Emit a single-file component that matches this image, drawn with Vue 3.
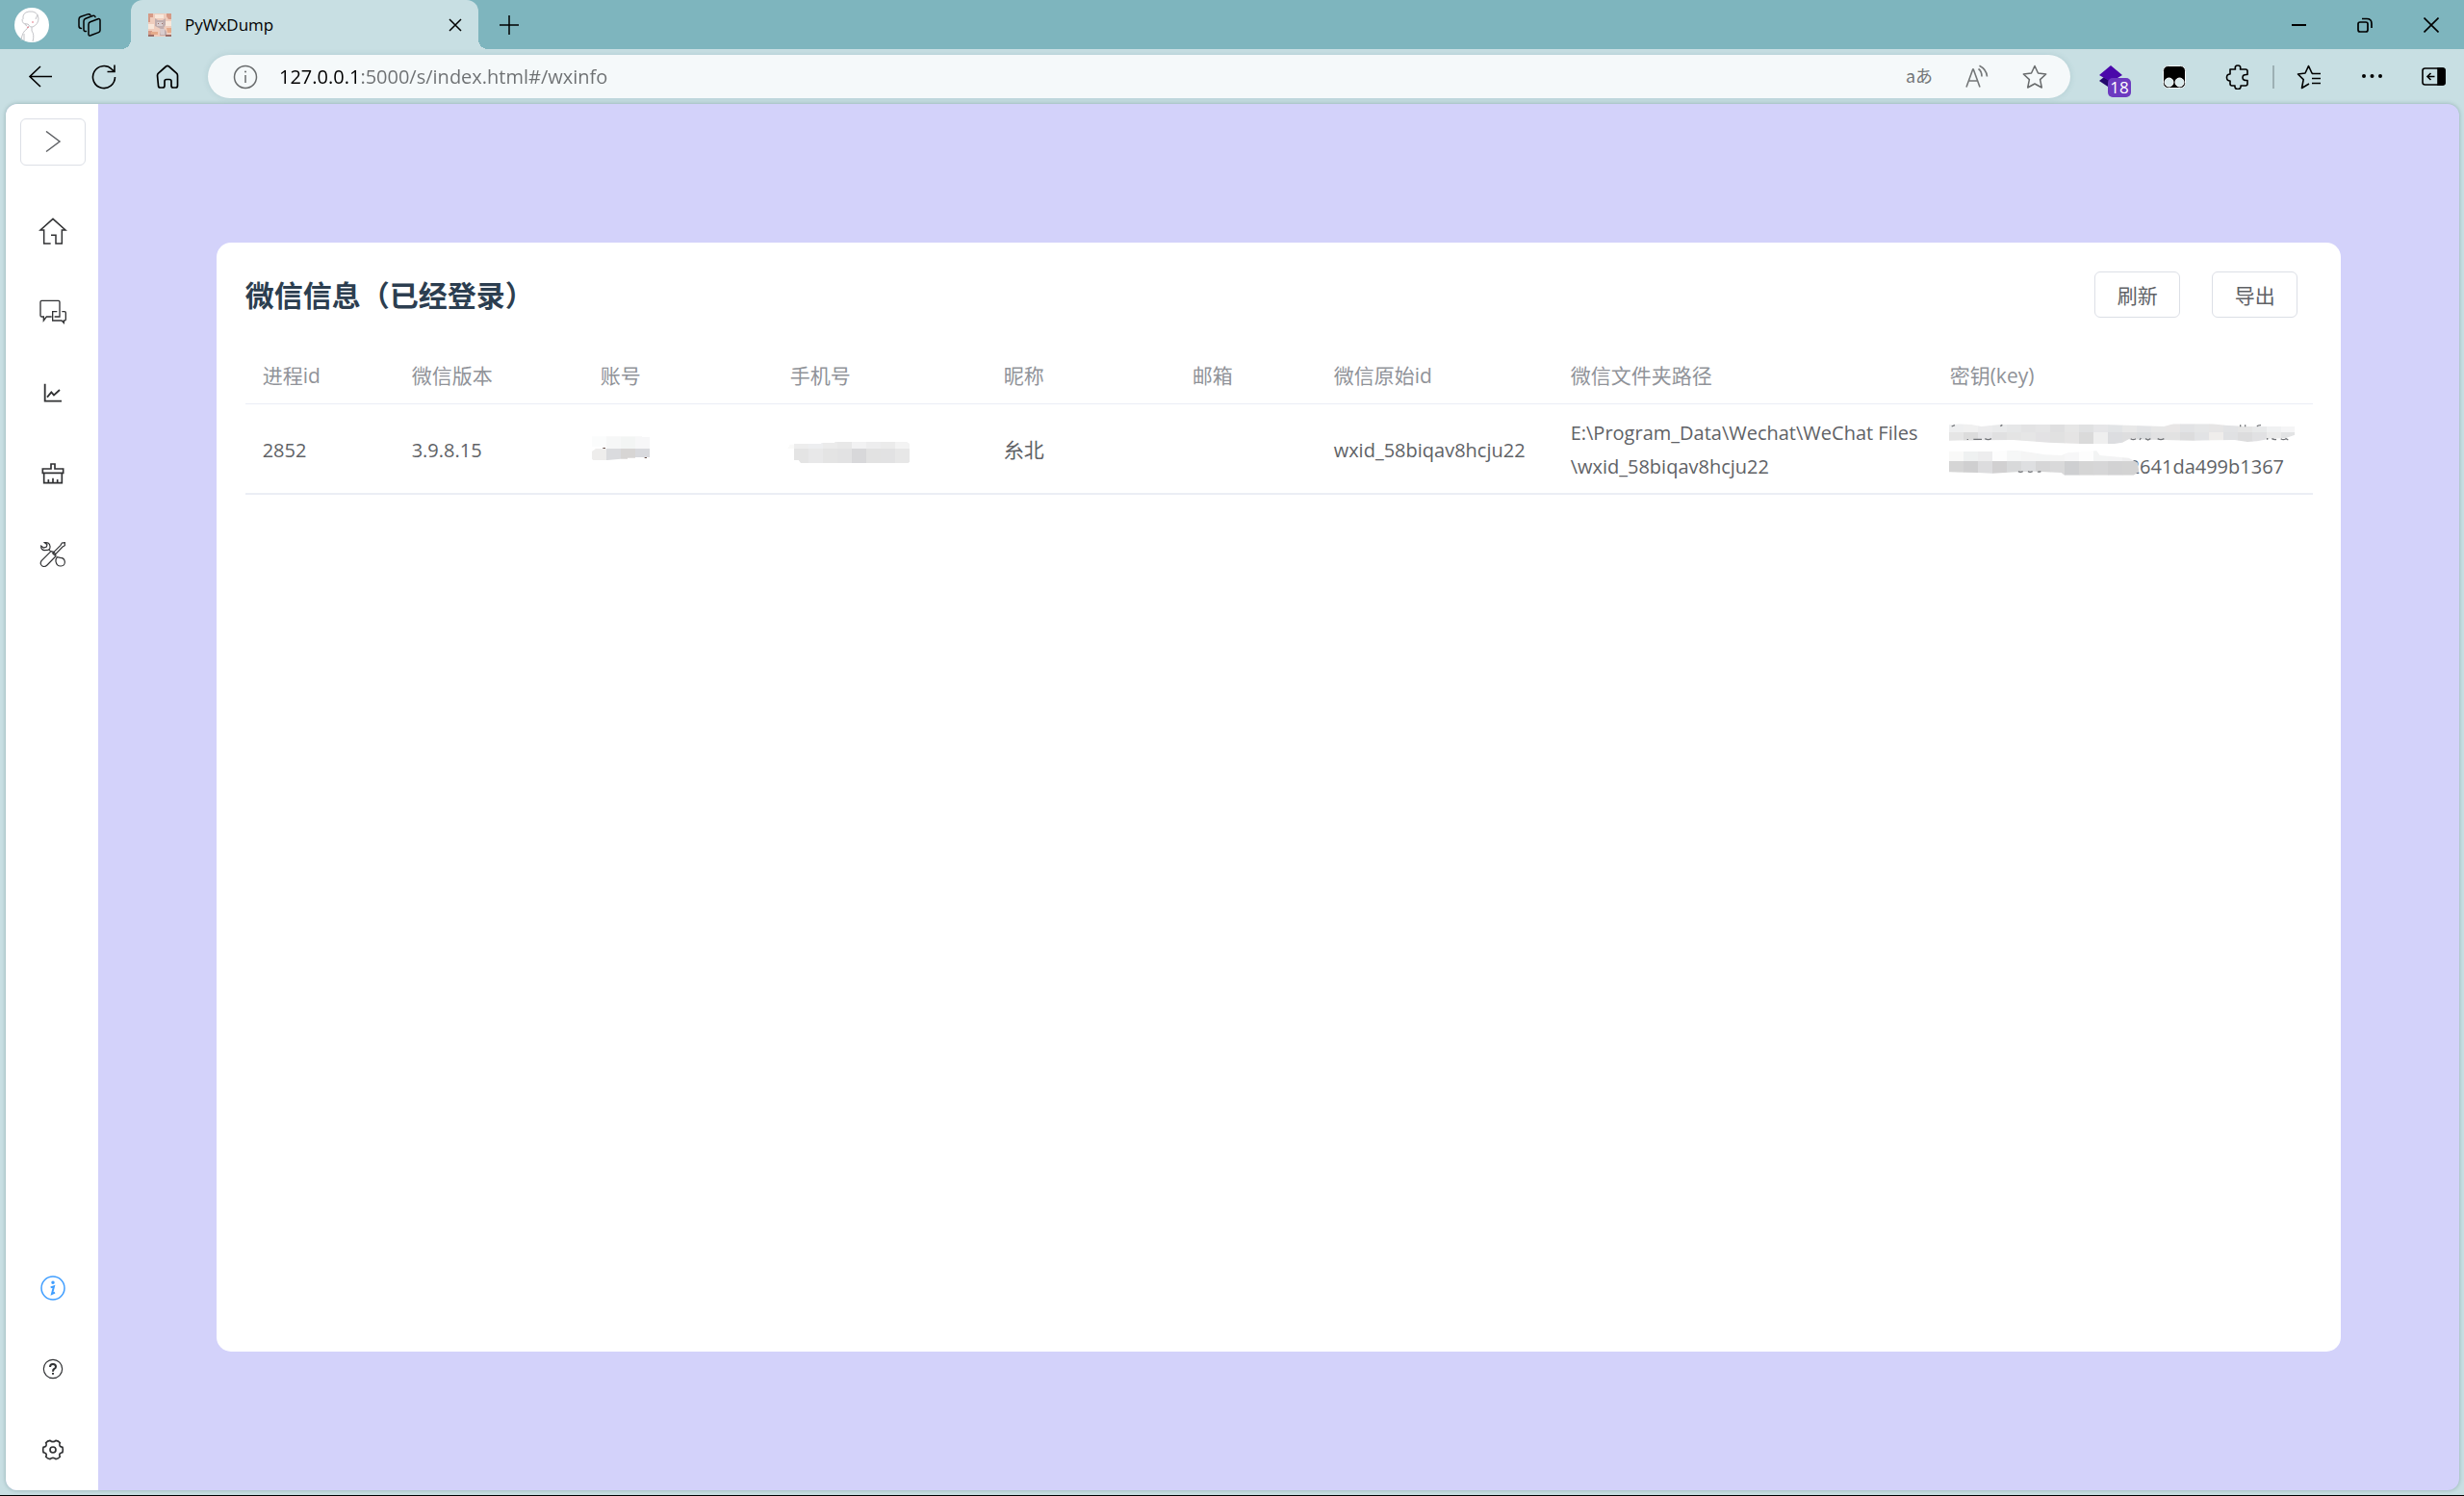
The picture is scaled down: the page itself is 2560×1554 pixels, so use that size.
<script setup>
import { ref } from 'vue'

const url = ref('127.0.0.1:5000/s/index.html#/wxinfo')

const columns = [
  { label: '进程id', width: 155 },
  { label: '微信版本', width: 196 },
  { label: '账号', width: 197 },
  { label: '手机号', width: 222 },
  { label: '昵称', width: 196 },
  { label: '邮箱', width: 147 },
  { label: '微信原始id', width: 246 },
  { label: '微信文件夹路径', width: 394 },
  { label: '密钥(key)', width: 395 },
]

const keyTop = ['#eeeff0', '#f0f0f0', '#ececed', '#e9eaeb', '#e6e7e8', '#e3e3e4', '#e5e5e6', '#dfdfe0', '#e6e6e6', '#e0e1e2', '#e6e6e8', '#e2e4e6', '#e8e8e8', '#e3e4e6', '#e7e7e7', '#e8e6e6', '#e2e3e5', '#e5e6e7', '#e6e5e5', '#e2e3e5', '#e5e5e5', '#e8e9ea', '#f0f1f2', '#f5f5f6']
const keyBottom = ['#e5e5e5', '#dcdcdc', '#e6e6e8', '#e0e0e1', '#e4e4e4', '#e6e6e6', '#e3e2e4', '#e1e1e1', '#e5e4e4', '#dadada', '#efefef', '#dcdde0', '#dededf', '#dadcde', '#e1e1e2', '#e2e2e2', '#dcdcdd', '#e2e3e5', '#efedeb', '#e0e1e3', '#dcdcdd', '#e1e1e3', '#ebebeb', '#e2e3e4']
const key2Top = ['#f9f9f8', '#eff1f1', '#ededee', '#fdfdfd', '#f6f7f7', '#f5f5f5', '#f4f5f5', '#f5f5f5', '#f7f7f8', '#fdfdfd', '#f3f4f4', '#f3f3f4', '#efeff0', '#f1f1f1']
const key2Bottom = ['#d5d5d5', '#cfcfd0', '#dcdcde', '#d1d0d1', '#d8d9da', '#dedfe1', '#d6d6d7', '#d9d9da', '#cecfd1', '#d5d5d5', '#d6d6d7', '#d2d2d3', '#d3d3d3', '#d3d3d4']
const phoneTop = ['#ededed', '#edeef0', '#ebebeb', '#e8e8e8', '#f2f2f3', '#ededee', '#ebebeb', '#f3f3f3']
const phoneBottom = ['#e4e4e4', '#e8e8e9', '#e4e4e4', '#e2e2e3', '#d8d8da', '#e2e2e2', '#e2e2e3', '#e7e7e7']
</script>

<template>
  <div class="browser">
    <header class="titlebar">
      <button class="avatar" aria-label="个人资料">
        <svg viewBox="0 0 36 36" width="36" height="36" fill="none" stroke="#c4c4c8" stroke-width="1">
          <circle cx="18" cy="18" r="18" fill="#fff" stroke="none" />
          <path d="M9 12Q8 5 15 4Q24 3 25 11Q25 17 19 20Q16 21 14 17Q8 18 8 12M12 16q-2 2 1 3M24 7l-2 5M15 19l-2 3q-5 3-6 12M18 20l0 4q3 4 1 11M10 27v7" />
          <path d="M18 15h2M13 20q1 1 2 0" stroke="#e57d8b" />
        </svg>
      </button>
      <button class="workspaces" aria-label="工作区">
        <svg viewBox="0 0 24 24" width="24" height="24" fill="none" stroke="#000" stroke-width="1.5" stroke-linejoin="round" stroke-linecap="round">
          <path d="M11 11.500q0-2 1.800-2.700l8-3q2.200-.700 2.200 1.300v10.500q0 1.400-1.500 2l-8.200 3.200q-2.300.800-2.300-1.300z" />
          <path d="M8.500 18.500q-2.500.500-2.500-2v-8.500q0-2 2-2.800l7-2.700q2.500-.900 3 1.200" />
          <path d="M3.500 15.500Q1 15.500 1 13V6q0-2 2-2.800L10 .900q2.300-.700 3 .900" />
        </svg>
      </button>
      <div class="tab">
        <svg class="favicon" viewBox="0 0 24 24" width="24" height="24">
          <path fill="#efcdbd" d="M0 0h24v24H0z" />
          <path fill="#d59a86" d="M0 0h5v4H2v5H0zM19 0h5v6h-3l-2-3zM0 18h4v6H0z" />
          <path fill="#f8e7da" d="M7 1h9v4H7zM0 11h6v5H0zM17 8h7v5h-7z" />
          <path fill="#c0adad" d="M7 5l3 2h5l3-2v7l-2 3 3 4v4h-7l1-7-6-3z" />
          <path fill="#d9cccd" d="M9 9h6v4H9zM12 16h5v6h-4z" />
          <path fill="#e5ab8b" d="M3 19h7v3H3zM19 15h5v5h-4z" />
          <path fill="#9a6c66" d="M0 22h6v2H0zM18 22h6v2h-6zM10 10h1v1h-1zM14 10h1v1h-1z" />
        </svg>
        <span class="tab-title">PyWxDump</span>
        <button class="tab-close" aria-label="关闭标签页">
          <svg viewBox="0 0 14 14" width="14" height="14" stroke="#000" stroke-width="1.500"><path d="M1 1l12 12M13 1L1 13" /></svg>
        </button>
      </div>
      <button class="new-tab" aria-label="新建标签页">
        <svg viewBox="0 0 22 22" width="22" height="22" stroke="#000" stroke-width="1.500"><path d="M11 1v20M1 11h20" /></svg>
      </button>
      <div class="window-controls">
        <button aria-label="最小化"><svg viewBox="0 0 16 16" width="16" height="16"><path d="M1 7h15v2H1z" /></svg></button>
        <button aria-label="还原">
          <svg viewBox="0 0 16 16" width="16" height="16" fill="none" stroke="#000" stroke-width="1.700"><rect x="1" y="5" width="10" height="10" rx="2" /><path d="M5 1.500h5q5 0 5 5V11" /></svg>
        </button>
        <button aria-label="关闭"><svg viewBox="0 0 16 16" width="16" height="16" stroke="#000" stroke-width="1.600"><path d="M.500.500l15 15M15.500.500l-15 15" /></svg></button>
      </div>
    </header>

    <nav class="toolbar">
      <button class="tool" aria-label="后退">
        <svg viewBox="0 0 26 26" width="26" height="26" fill="none" stroke="#000" stroke-width="1.600"><path d="M25 12.500H2M13 2L2 12.500l11 10.500" /></svg>
      </button>
      <button class="tool" aria-label="刷新">
        <svg viewBox="0 0 26 26" width="26" height="26" fill="none" stroke="#000" stroke-width="1.600"><path d="M24.500 13A11.500 11.500 0 1 1 21 4.800L24 7.500M24 .500v7h-7.500" /></svg>
      </button>
      <button class="tool" aria-label="主页">
        <svg viewBox="0 0 26 26" width="26" height="26" fill="none" stroke="#000" stroke-width="1.700" stroke-linejoin="round"><path d="M2.500 11.500q0-1.500 1-2.400L11.500 2q1.500-1.200 3 0l8 7.100q1 .900 1 2.400V22q0 2-2 2h-2.500q-2 0-2-2v-4.500q0-2-2-2h-3q-2 0-2 2V22q0 2-2 2h-2.500q-2 0-2-2z" /></svg>
      </button>
      <div class="address">
        <button class="site-info" aria-label="查看站点信息">
          <svg viewBox="0 0 26 26" width="26" height="26" fill="none" stroke="#686b6c" stroke-width="1.500"><circle cx="13" cy="13" r="11.500" /><path d="M13 11v8" /><circle cx="13" cy="7.500" r="1" fill="#686b6c" stroke="none" /></svg>
        </button>
        <input v-model="url" class="url" type="text" aria-label="地址栏" />
        <button class="translate" aria-label="翻译此页">aあ</button>
        <button aria-label="朗读此页">
          <svg viewBox="0 0 26 26" width="26" height="26" fill="none" stroke="#747778" stroke-width="1.600"><path d="M2 23.500L8.700 5h.600L16 23.500M4.500 17h9.500M14.500 4.500q3.500 2.500 3.500 8M15.500 1.200q7.500 3.800 8 11.300" /></svg>
        </button>
        <button aria-label="收藏此页">
          <svg viewBox="0 0 26 26" width="26" height="26" fill="none" stroke="#686b6c" stroke-width="1.500" stroke-linejoin="round"><path d="M13 1.500l3.500 7.500 8.200 1-6.100 5.600 1.700 8.400L13 20l-7.300 4 1.700-8.400L1.300 10l8.200-1z" /></svg>
        </button>
      </div>
      <button class="tool extension" aria-label="扩展">
        <svg viewBox="0 0 26 26" width="26" height="26"><path fill="#23086d" d="M1 17l5-4 12 8-5 4z" /><path fill="#4a08aa" d="M13 1l12 10-5 3 1 2-5 4-3-2L1 11z" /></svg>
        <span class="badge">18</span>
      </button>
      <button class="tool" aria-label="脚本管理器">
        <svg viewBox="0 0 26 26" width="26" height="26"><rect x="1.500" y="1.500" width="23" height="23" rx="5" stroke="#f2f6f7" /><circle cx="7.500" cy="18.500" r="4.500" fill="#d9eaec" stroke="#fff" /><circle cx="18.500" cy="18.500" r="4.500" fill="#d9eaec" stroke="#fff" /></svg>
      </button>
      <button class="tool" aria-label="扩展程序">
        <svg viewBox="0 0 26 26" width="26" height="26" fill="none" stroke="#000" stroke-width="1.600" stroke-linejoin="round"><path d="M5 5h5.500Q9.500 1 13 1t2.500 4H21q2 0 2 2v3.500q-5-.500-5 3t5 3V20q0 2-2 2h-5q.500 3.500-3 3.500T10 22H7q-2 0-2-2v-3q-3.500 0-3.500-3.500T5 10z" /></svg>
      </button>
      <span class="divider"></span>
      <button class="tool" aria-label="收藏夹">
        <svg viewBox="0 0 26 26" width="26" height="26" fill="none" stroke="#000" stroke-width="1.600" stroke-linejoin="round"><path d="M17 9.500L16 9l-3.500-7.500L9 9l-7.500 1 5.700 5.600L5.500 24.500 13 20M16 9.500h9M16 14.500h9M16 19.500h9" /></svg>
      </button>
      <button class="tool" aria-label="设置及其他">
        <svg viewBox="0 0 26 26" width="26" height="26"><circle cx="4" cy="12" r="2" /><circle cx="12.500" cy="12" r="2" /><circle cx="21" cy="12" r="2" /></svg>
      </button>
      <button class="tool last" aria-label="侧边栏">
        <svg viewBox="0 0 26 26" width="26" height="26" fill="none" stroke="#000" stroke-width="1.600"><rect x="1" y="4" width="23" height="17" rx="2.500" /><path fill="#000" d="M17 4h5q2 0 2 2v13q0 2-2 2h-5z" /><path d="M13.500 12.500H6M9.500 9L6 12.500 9.500 16" /></svg>
      </button>
    </nav>

    <div class="viewport">
      <aside class="sidebar">
        <button class="toggle" aria-label="展开菜单">
          <svg viewBox="0 0 24 24" width="24" height="24" fill="none" stroke="#606266" stroke-width="1.500"><path d="M5 .500L19 11 5 21.500" /></svg>
        </button>
        <a class="item" href="#/" aria-label="首页">
          <svg viewBox="-45 -45 90 90" stroke-width="4.500"><path d="M-6 13H9V39H28V-3H39L0-38-39-3H-28V39H-7" /></svg>
        </a>
        <a class="item" href="#/chat" aria-label="聊天">
          <svg viewBox="-45 -45 90 90" stroke-width="4"><path d="M-4 15H-20L-29 27V15H-35q-4 0-4-4V-31q0-4 4-4H17q4 0 4 4V15H5M13-1H-1V27H27L34 34V27H36q4 0 4-4V3q0-4-4-4H28" /></svg>
        </a>
        <a class="item" href="#/chart" aria-label="统计">
          <svg viewBox="-45 -45 90 90" stroke-width="5.500"><path d="M-25-28V26H27M-18 14L-5-2 3 7 21-9" /></svg>
        </a>
        <a class="item" href="#/clean" aria-label="清理">
          <svg viewBox="-45 -45 90 90" stroke-width="5"><path d="M-32-15H-6V-30H6V-15H32V-2H-32ZM-28-2V29H28V-2M-14 18V29M0 14V29M14 18V29" /></svg>
        </a>
        <a class="item" href="#/tools" aria-label="工具">
          <svg viewBox="-45 -45 90 90" stroke-width="3.500"><path d="M-26-37Q-10-39-9-25-8-15-17-14L-27-13Q-38-15-37-27L-29-21-20-24-18-31ZM-14-17L-8-11M37-37L28-36 24-29-1-4 5 2 30-24 37-28ZM-6-10L-36 20Q-42 30-33 36-25 40-18 33L9 5Q8-8-6-10ZM13 8Q8 14 9 22 12 37 25 36 38 35 37 22 35 10 23 10Z" /></svg>
        </a>
        <span class="spacer"></span>
        <a class="item active" href="#/wxinfo" aria-label="微信信息">
          <svg viewBox="-45 -45 90 90" stroke-width="4.500"><circle r="36" /><circle cy="-17" r="3" fill="currentColor" /><path d="M-7-2L3-5-3 18 6 14" stroke-width="6" /></svg>
        </a>
        <a class="item" href="#/help" aria-label="帮助">
          <svg viewBox="-45 -45 90 90" stroke-width="3.500"><circle r="29" /><path d="M-9-6Q-9-15 0-15 9-15 9-7 9-3 4 0 0 2 0 8M0 12V17" stroke-width="6" /></svg>
        </a>
        <a class="item" href="#/setting" aria-label="设置">
          <svg viewBox="-45 -45 90 90" stroke-width="5"><circle r="9" /><path d="M30-8Q32 0 30 8 23 10 21 13 19 16 22 22 17 28 9 29 5 25 0 25-5 25-9 29-17 28-22 22-19 16-21 13-23 10-30 8-32 0-30-8-23-10-21-13-19-16-22-22-17-28-9-29-5-25 0-25 5-25 9-29 17-28 22-22 19-16 21-13 23-10 30-8Z" /></svg>
        </a>
      </aside>

      <main class="main">
        <section class="card">
          <div class="card-head">
            <h1>微信信息（已经登录）</h1>
            <div class="actions">
              <button>刷新</button>
              <button>导出</button>
            </div>
          </div>
          <table>
            <colgroup>
              <col v-for="c in columns" :key="c.label" :style="{ width: c.width + 'px' }" />
            </colgroup>
            <thead>
              <tr><th v-for="c in columns" :key="c.label" scope="col">{{ c.label }}</th></tr>
            </thead>
            <tbody>
              <tr>
                <td>2852</td>
                <td>3.9.8.15</td>
                <td>
                  <svg class="mosaic" viewBox="57 24 153 108" width="51" height="36">
                    <path fill="#fbfcfc" d="M30 37H75V69H30z" /><path fill="#f6f7f7" d="M75 37H120V75H75z" />
                    <path fill="#f3f5f4" d="M120 37H165V75H120z" /><path fill="#f7f7f8" d="M165 37H186V39H210V75H165z" />
                    <path fill="#eeedec" d="M42 75H75V111H34L30 107V84z" /><path fill="#dadbde" d="M75 75H120V107L78 111H75z" />
                    <path fill="#d7d5d4" d="M120 75H165V104H141V107H120z" /><path fill="#d8d9dd" d="M165 75H210V102H165z" />
                    <path fill="#66504a" d="M64 72h8v3h-8zM194 102h7v3h-7z" />
                  </svg>
                </td>
                <td>
                  <svg class="mosaic" viewBox="648 24 372 108" width="124" height="36">
                    <defs><clipPath id="phone-mask"><path d="M660 60H745V57H787V54H1012L1020 60V116L1016 120H681L674 111H660z" /></clipPath></defs>
                    <path fill="#fafaf9" d="M648 62H660V75H640z" />
                    <g clip-path="url(#phone-mask)">
                      <rect v-for="(c, i) in phoneTop" :key="i" :x="660 + i * 45" y="50" width="46" height="26" :fill="c" />
                      <rect v-for="(c, i) in phoneBottom" :key="i" :x="660 + i * 45" y="75" width="46" height="46" :fill="c" />
                    </g>
                  </svg>
                </td>
                <td class="cjk">糸北</td>
                <td></td>
                <td>wxid_58biqav8hcju22</td>
                <td>E:\Program_Data\Wechat\WeChat Files<br />\wxid_58biqav8hcju22</td>
                <td>
                  <div class="key">
                    2641da499b1367
                    <svg class="mosaic" viewBox="33 9 1080 210" width="360" height="70">
                      <defs>
                        <clipPath id="key-mask-1"><path d="M30 37L60 34 100 36 130 42 190 36H510L700 42 730 34H850L890 38 960 42H1108V68L1080 78 1030 80 990 88 960 90 920 84 790 86 700 84 590 82 570 92 545 96H440L340 92 230 84 30 86z" /></clipPath>
                        <clipPath id="key-mask-2"><path d="M30 120H165L240 116 330 130 380 132 400 124 490 118 500 132 590 140 618 155 622 182 605 194H390L380 186 300 182 240 184 165 188 120 186 30 184z" /></clipPath>
                      </defs>
                      <g clip-path="url(#key-mask-1)">
                        <rect v-for="(c, i) in keyTop" :key="i" :x="30 + i * 45" y="30" width="46" height="31" :fill="c" />
                        <rect v-for="(c, i) in keyBottom" :key="i" :x="30 + i * 45" y="60" width="46" height="40" :fill="c" />
                      </g>
                      <g clip-path="url(#key-mask-2)">
                        <rect v-for="(c, i) in key2Top" :key="i" :x="30 + i * 45" y="110" width="46" height="41" :fill="c" />
                        <rect v-for="(c, i) in key2Bottom" :key="i" :x="30 + i * 45" y="150" width="46" height="46" :fill="c" />
                      </g>
                      <path fill="none" stroke="#727478" stroke-width="4" d="M38 42L48 38M190 41L196 37M88 81V84M106 82H132M142 80Q152 86 162 80M596 80Q604 86 612 80M628 78L624 84M642 80L650 84 658 80M680 80Q690 86 700 80M938 37V43M953 37V43M990 42Q992 38 1002 38M1022 78V83M1036 80Q1044 84 1050 82M1064 80Q1072 86 1080 80L1087 84M246 182Q252 186 260 182M276 182Q282 186 290 182M306 182Q310 185 316 182" />
                    </svg>
                  </div>
                </td>
              </tr>
            </tbody>
          </table>
        </section>
      </main>
    </div>
  </div>
</template>

<style>
body {
  margin: 0;
}
</style>

<style scoped>
.browser,
.browser * {
  box-sizing: border-box;
}
.browser {
  display: flex;
  flex-direction: column;
  min-height: 100vh;
  background: #c8dfe3;
  border-bottom: 1px solid #000;
  font-family: 'Open Sans', 'Noto Sans CJK SC', sans-serif;
  color: #606266;
}
button {
  display: flex;
  align-items: center;
  justify-content: center;
  padding: 0;
  border: 0;
  background: none;
  font-family: inherit;
  color: inherit;
}
svg {
  display: block;
  flex: none;
}

.titlebar {
  display: flex;
  align-items: center;
  height: 51px;
  padding-left: 15px;
  background: #7eb5be;
}
.avatar {
  width: 36px;
}
.workspaces {
  width: 24px;
  margin: 0 31px 0 30px;
}
.tab {
  position: relative;
  display: flex;
  align-items: center;
  width: 361px;
  height: 51px;
  padding: 0 17px 0 18px;
  border-radius: 12px 12px 0 0;
  background: #c8dfe3;
  color: #000;
}
.tab::before,
.tab::after {
  content: '';
  position: absolute;
  bottom: 0;
  width: 10px;
  height: 10px;
}
.tab::before {
  right: 100%;
  background: radial-gradient(circle at 0 0, #7eb5be 10px, #c8dfe3 10px);
}
.tab::after {
  left: 100%;
  background: radial-gradient(circle at 100% 0, #7eb5be 10px, #c8dfe3 10px);
}
.tab-title {
  flex: 1;
  margin-left: 14px;
  font-size: 17px;
}
.new-tab {
  width: 64px;
}
.window-controls {
  display: flex;
  margin-left: auto;
}
.window-controls button {
  width: 69px;
  height: 50px;
}

.toolbar {
  display: flex;
  align-items: center;
  height: 57px;
  padding-left: 9px;
}
.tool {
  position: relative;
  width: 66px;
  height: 45px;
}
.tool.last {
  width: 62px;
}
.address {
  display: flex;
  flex: 1;
  align-items: center;
  height: 45px;
  margin: 0 9px;
  padding: 0 7px 0 26px;
  border-radius: 23px;
  background: #f5f9fa;
  box-shadow: 0 0 6px rgba(60, 110, 120, 0.16);
}
.address button {
  width: 60px;
  height: 45px;
}
.address .site-info {
  width: 26px;
}
.url {
  flex: 1;
  min-width: 0;
  margin-left: 22px;
  padding: 0;
  border: 0;
  outline: 0;
  background: linear-gradient(90deg, #000 80px, #6d7072 80px);
  background-clip: text;
  -webkit-text-fill-color: transparent;
  font-family: inherit;
  font-size: 20px;
  line-height: 40px;
}
.address .translate {
  padding-bottom: 3px;
  font-family: 'Noto Sans CJK JP', sans-serif;
  font-size: 18px;
  color: #747778;
}
.badge {
  position: absolute;
  left: 30px;
  top: 24px;
  width: 24px;
  height: 20px;
  border-radius: 5px;
  background: #6c3ac0;
  font-size: 17px;
  line-height: 20px;
  text-align: center;
  color: #fff;
}
.divider {
  width: 2px;
  height: 24px;
  margin: 0 3px;
  background: #9db0b4;
}

.viewport {
  display: flex;
  flex: 1;
  margin: 0 5px 5px 6px;
  overflow: hidden;
  border-radius: 12px;
  background: #d3d2fa;
  box-shadow: 0 0 4px rgba(60, 100, 100, 0.4);
}
.sidebar {
  display: flex;
  flex-direction: column;
  width: 96px;
  padding-top: 15px;
  background: #fff;
}
.toggle {
  flex: none;
  width: 68px;
  height: 49px;
  margin: 0 0 26px 15px;
  border: 1px solid #dcdfe6;
  border-radius: 6px;
}
.item {
  display: flex;
  flex: none;
  align-items: center;
  justify-content: center;
  height: 84px;
  padding-left: 1px;
  color: #303133;
}
.item svg {
  width: 30px;
  height: 30px;
  fill: none;
  stroke: currentColor;
}
.active {
  color: #409eff;
}
.spacer {
  flex: 1;
}

.main {
  display: flex;
  flex: 1;
  align-items: center;
  justify-content: center;
}
.card {
  width: 90%;
  height: 80%;
  padding: 30px;
  border-radius: 15px;
  background: #fff;
}
.card-head {
  display: flex;
  align-items: center;
  justify-content: space-between;
  height: 48px;
  margin-bottom: 30px;
}
h1 {
  margin: 0;
  padding-top: 2px;
  font-size: 30px;
  font-weight: 700;
  line-height: 48px;
  color: #2c3e50;
}
.actions {
  display: flex;
  gap: 33px;
  margin-right: 15px;
}
.actions button {
  width: 89px;
  height: 48px;
  border: 1px solid #dcdfe6;
  border-radius: 6px;
  font-size: 21px;
}
table {
  width: 100%;
  table-layout: fixed;
  border-collapse: separate;
  border-spacing: 0;
}
th,
td {
  padding: 13px 0 11px 18px;
  font-size: 21px;
  font-weight: 400;
  line-height: 35px;
  text-align: left;
  white-space: nowrap;
}
th {
  border-bottom: 1px solid #ebeef5;
  color: #909399;
}
td {
  padding: 12px 0 10px 18px;
  border-bottom: 2px solid #ebeef5;
  font-size: 20px;
}
td.cjk {
  font-size: 21px;
}
.mosaic {
  overflow: visible;
}
.key {
  position: relative;
  padding: 35px 0 0 186px;
}
.key .mosaic {
  position: absolute;
  top: 0;
  left: 0;
}
</style>
